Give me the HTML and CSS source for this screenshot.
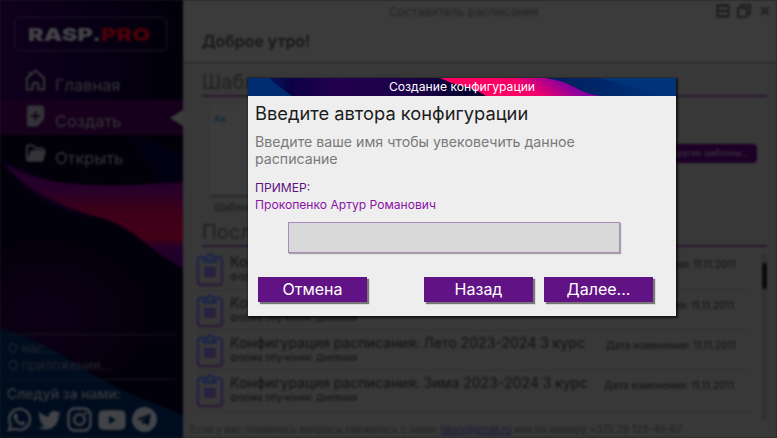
FILE: index.html
```
<!DOCTYPE html>
<html lang="ru">
<head>
<meta charset="utf-8">
<title>Составитель расписания</title>
<link rel="stylesheet" href="styles.css">
</head>
<body>
<svg class="defs" width="0" height="0">
  <defs>
    <linearGradient id="clip" x1="0" y1="0" x2="0" y2="1"><stop offset="0" stop-color="#1b2547"/><stop offset=".5" stop-color="#261d42"/><stop offset="1" stop-color="#2c1a36"/></linearGradient>
    <symbol id="task" viewBox="0 0 28 34">
      <path d="M7 4H4Q2 4 2 7V29Q2 32 5 32H23Q26 32 26 29V7Q26 4 23 4H21" fill="none" stroke="url(#clip)" stroke-width="2.4"/>
      <path d="M7 3H10Q11 0 14 0T18 3H21V10H7Z" fill="#1d2848"/><circle cx="14" cy="5" r="2.2" fill="#363638"/>
      <path d="M8 14H20V24H8Z" fill="#271f40"/><path d="M8 17.3H20M8 20.700H20" stroke="#302b3d" stroke-width=".8"/>
    </symbol>
  </defs>
</svg>
<div class="app">
  <aside class="sidebar">
    <svg class="backdrop" viewBox="0 0 183 438" preserveAspectRatio="none">
      <defs>
        <linearGradient id="night" x1="0" y1="0" x2="1" y2=".12"><stop offset="0" stop-color="#10001d"/><stop offset=".5" stop-color="#070015"/><stop offset="1" stop-color="#02000a"/></linearGradient>
        <linearGradient id="flame" x1="0" y1="0" x2="0" y2="1"><stop offset="0" stop-color="#240029"/><stop offset=".22" stop-color="#26002a"/><stop offset=".45" stop-color="#3c0019"/><stop offset=".7" stop-color="#430016"/><stop offset=".82" stop-color="#23002a"/><stop offset="1" stop-color="#1a0028"/></linearGradient>
        <radialGradient id="violet"><stop offset="0" stop-color="#0e0017"/><stop offset="1" stop-color="#02000b"/></radialGradient>
      </defs>
      <rect width="183" height="438" fill="url(#night)"/>
      <path d="M0 135H183V190L60 185L0 160Z" fill="#020009"/>
      <path d="M130 136Q162 142 183 158V184H160Z" fill="#020112"/>
      <path d="M0 160Q40 215 105 220L183 267V438H0Z" fill="#02000a"/>
      <ellipse cx="40" cy="318" rx="120" ry="85" fill="url(#violet)"/>
      <path d="M5 165Q30 180 75 184Q120 187 183 182V268Q164 259 143 241Q125 225 102 218Q40 203 5 165Z" fill="url(#flame)"/>
      <path d="M0 328Q40 340 70 360Q110 387 145 400Q165 406 183 416V438H0Z" fill="#000d1e"/>
    </svg>
    <div class="logo"><span class="brand">RASP.<b>PRO</b></span></div>
    <nav class="menu">
      <a class="item"><svg viewBox="0 0 22 24"><path d="M2 10L11 2L20 10V22H14V17Q14 15 11 15T8 17V22H2ZM5 7V3" fill="none" stroke="currentColor" stroke-width="2.2" stroke-linejoin="round"/></svg>Главная</a>
      <a class="item active"><svg viewBox="0 0 22 24"><path fill="currentColor" fill-rule="evenodd" d="M4 1H17Q20 1 20 4V15L13 23H4Q2 23 2 20V4Q2 1 4 1ZM10 7V11H6V13H10V17H12V13H16V11H12V7Z"/></svg>Создать</a>
      <a class="item last"><svg viewBox="0 0 22 24"><path d="M2 19V5Q2 3 4 3H8L11 6H17Q19 6 19 8" fill="none" stroke="currentColor" stroke-width="2"/><path d="M6 8H22L19 20H2Z" fill="currentColor"/></svg>Открыть</a>
    </nav>
    <div class="about"><span>О нас...</span><span>О приложении...</span></div>
    <div class="follow">Следуй за нами:</div>
    <div class="social">
      <svg viewBox="0 0 24 24"><path d="M2 22L3.500 17A10 10 0 1 1 8 21Z" fill="none" stroke="currentColor" stroke-width="2.300"/><path d="M8 6Q6 7 6.500 10Q8.500 16 14 17.500Q17 18 18 15.500L15 13.500L13.500 15Q11 14 9.500 11L10.500 9.500L9.500 6.500Z" fill="currentColor"/></svg>
      <svg viewBox="0 0 16 16"><path fill="currentColor" d="M5.026 15c6.038 0 9.341-5.003 9.341-9.334 0-.14 0-.282-.006-.422A6.685 6.685 0 0 0 16 3.542a6.658 6.658 0 0 1-1.889.518 3.301 3.301 0 0 0 1.447-1.817 6.533 6.533 0 0 1-2.087.793A3.286 3.286 0 0 0 7.875 6.030a9.325 9.325 0 0 1-6.767-3.429 3.289 3.289 0 0 0 1.018 4.382A3.323 3.323 0 0 1 .64 6.575v.045a3.288 3.288 0 0 0 2.632 3.218 3.203 3.203 0 0 1-.865.115 3.230 3.230 0 0 1-.614-.057 3.283 3.283 0 0 0 3.067 2.277A6.588 6.588 0 0 1 .78 13.580a6.320 6.320 0 0 1-.78-.045A9.344 9.344 0 0 0 5.026 15z"/></svg>
      <svg viewBox="0 0 24 24"><g fill="none" stroke="currentColor" stroke-width="2.400"><rect x="1.500" y="1.500" width="21" height="21" rx="6"/><circle cx="12" cy="12" r="5"/></g><circle cx="18" cy="6" r="1.500" fill="currentColor"/></svg>
      <svg class="wide" viewBox="0 0 28 20"><path fill="currentColor" fill-rule="evenodd" d="M4 .5Q14-.5 24 .5Q27.500 1 27.500 5V15Q27.500 19 24 19.500Q14 20.500 4 19.500Q.5 19 .5 15V5Q.5 1 4 .5ZM11 6V14L18 10Z"/></svg>
      <svg viewBox="0 0 24 24"><path fill="currentColor" fill-rule="evenodd" d="M12 0A12 12 0 1 0 12 24A12 12 0 0 0 12 0ZM4.500 11.500L18 6.500L16 18L11.500 15L9.500 17V13.500L15 9L8 13Z"/></svg>
    </div>
  </aside>
  <main class="main">
    <header class="top">
      <div class="titlebar"><span class="apptitle">Составитель расписания</span>
        <div class="winbtns">
          <svg viewBox="0 0 14 14"><path d="M1.500 1.500H12.500V12.500H1.500ZM3 7H11" fill="none" stroke="currentColor" stroke-width="1.800"/></svg>
          <svg viewBox="0 0 14 14"><path d="M1 4H10V13H1ZM4 4V1H13V10H10" fill="none" stroke="currentColor" stroke-width="1.600"/></svg>
          <svg viewBox="0 0 14 14"><path d="M3 3L11 11M11 3L3 11" stroke="currentColor" stroke-width="1.600"/></svg>
        </div>
      </div>
      <h1>Доброе утро!</h1>
    </header>
    <h2>Шаблоны</h2>
    <section class="templates">
      <div class="template"><div class="sheet">Aa</div><span>Шаблон 1</span></div>
      <a class="more">Другие шаблоны...</a>
    </section>
    <h2>Последние</h2>
    <section class="recent">
      <div class="rows">
        <div class="row"><svg><use href="#task"/></svg><div class="info"><strong>Конфигурация расписания: Лето 2023-2024 3 курс</strong><small>Форма обучения: Дневная</small></div><time>Дата изменения: 11.11.2011</time></div>
        <div class="row short"><svg><use href="#task"/></svg><div class="info"><strong>Конфигурация расписания: Зима 2023-2024 3 курс</strong><small>Форма обучения: Дневная</small></div><time>Дата изменения: 11.11.2011</time></div>
        <div class="row"><svg><use href="#task"/></svg><div class="info"><strong>Конфигурация расписания: Лето 2023-2024 3 курс</strong><small>Форма обучения: Дневная</small></div><time>Дата изменения: 11.11.2011</time></div>
        <div class="row short"><svg><use href="#task"/></svg><div class="info"><strong>Конфигурация расписания: Зима 2023-2024 3 курс</strong><small>Форма обучения: Дневная</small></div><time>Дата изменения: 11.11.2011</time></div>
      </div>
      <div class="scroll"><i></i></div>
    </section>
    <footer>Если у вас появились вопросы свяжитесь с нами: <a>tikon@gmail.ru</a> или по номеру +375 29 123-45-67</footer>
  </main>
</div>
<div class="modal">
  <div class="modal-head">
    <svg class="backdrop" viewBox="0 0 428 18" preserveAspectRatio="none">
      <defs>
        <linearGradient id="mh"><stop offset="0" stop-color="#002b70"/><stop offset=".1" stop-color="#0c0045"/><stop offset=".12" stop-color="#12004a"/><stop offset=".2" stop-color="#22004d"/><stop offset=".38" stop-color="#1b0048"/><stop offset=".5" stop-color="#07002e"/></linearGradient>
        <linearGradient id="mp" gradientUnits="userSpaceOnUse" x1="270" y1="18" x2="290" y2="-12"><stop offset="0" stop-color="#ff0062"/><stop offset=".35" stop-color="#f0006c"/><stop offset="1" stop-color="#8b009d"/></linearGradient>
        <linearGradient id="mb"><stop offset="0" stop-color="#001d58"/><stop offset="1" stop-color="#003580"/></linearGradient>
        <linearGradient id="ml" x1="0" y1="0" x2="1" y2="-.4"><stop offset=".45" stop-color="#002d72"/><stop offset="1" stop-color="#100a50"/></linearGradient>
      </defs>
      <rect width="428" height="18" fill="url(#mh)"/>
      <path d="M0 0H20L44 18H0Z" fill="url(#ml)"/>
      <path d="M192 0H428V18H238Q228 11 214 8Q202 5 192 0Z" fill="url(#mp)"/>
      <path d="M297 0H428V18H354Q340 17 328 10Q314 2 297 0Z" fill="url(#mb)"/>
      <path d="M350 0H428V18H414Q388 9 350 0Z" fill="#003478"/>
    </svg>
    <span>Создание конфигурации</span>
  </div>
  <div class="modal-body">
    <h3>Введите автора конфигурации</h3>
    <p class="hint">Введите ваше имя чтобы увековечить данное<br>расписание</p>
    <p class="example"><span>ПРИМЕР:</span><br>Прокопенко Артур Романович</p>
    <input class="field" type="text" aria-label="Автор">
    <div class="actions"><button class="cancel">Отмена</button><button>Назад</button><button>Далее...</button></div>
  </div>
</div>
</body>
</html>
```
FILE: styles.css
```
* { box-sizing: border-box; }
body { margin: 0; width: 777px; height: 438px; overflow: hidden; position: relative; background: #1c1c1c; font-family: Inter, "Liberation Sans", sans-serif; }
h1, h2, h3, p { margin: 0; font-weight: 400; }
.defs { position: absolute; }
.backdrop { position: absolute; inset: 0; width: 100%; height: 100%; z-index: -1; }

.app { display: flex; height: 438px; filter: blur(1.25px); background: #383838; }
.sidebar { position: relative; z-index: 0; width: 183px; display: flex; flex-direction: column; padding-top: 17px; color: #404043; }
.logo { width: 153px; height: 34px; margin-left: 14px; border: 1px solid #1c1826; border-radius: 5px; display: flex; align-items: center; padding-left: 13px; }
.brand { font-size: 18px; font-weight: 900; transform: scaleX(1.31); transform-origin: left; white-space: nowrap; color: #424245; }
.brand b { color: #4a0008; font-weight: 900; }
.menu { margin-top: 12px; }
.item { position: relative; height: 37px; display: flex; align-items: center; padding: 6px 0 0 25px; gap: 9px; font-size: 16.400px; line-height: 30px; color: #343438; }
.item svg { width: 21px; height: 24px; margin-top: -9px; }
.item.active { height: 35px; background: #17001c; }
.item.active::after { content: ""; position: absolute; right: 0; top: 10px; border: 8px solid transparent; border-right: 13px solid #3b3b3b; border-left: 0; }
.item.last { padding-top: 9px; }
.about { margin: 162px 8px 0; height: 46px; border: solid #18171f; border-width: 1px 0; display: flex; flex-direction: column; font-size: 13px; line-height: 17px; padding-top: 5px; color: #25252e; }
.follow { margin: 6px 0 0 7px; font-size: 13.800px; line-height: 16px; font-weight: 600; white-space: nowrap; color: #33343a; }
.social { display: flex; align-items: center; gap: 6px; margin: 5px 0 0 7px; color: #414347; }
.social svg { width: 25px; height: 25px; }
.social svg:nth-child(2) { width: 23px; }
.social .wide { width: 28px; height: 20px; }

.main { flex: 1; min-width: 0; display: flex; flex-direction: column; background: #383838; color: #161616; }
.top { height: 64px; background: #3b3b3b; border-bottom: 1px solid #252525; }
.titlebar { height: 24px; display: flex; padding-left: 206px; justify-content: space-between; }
.apptitle { font-size: 12.100px; line-height: 24px; color: #222; }
.winbtns { display: flex; gap: 7px; padding: 4px 5px 0 0; color: #171717; }
.winbtns svg { width: 14px; height: 14px; }
h1 { font-size: 15.900px; font-weight: 600; line-height: 35px; margin-left: 19px; }
h2 { height: 34px; margin: 0 10px 0 19px; border-bottom: 2px solid #291631; font-size: 20px; line-height: 38px; color: #202020; }
.templates { height: 116px; padding: 8px 20px 0 27px; display: flex; justify-content: space-between; }
.template { width: 120px; }
.sheet { height: 92px; background: #3b3b3b; border-bottom: 2px solid #292929; padding: 8px 4px; font-size: 9px; font-weight: 700; color: #112c3d; }
.template span { display: block; margin-left: 4px; font-size: 10px; line-height: 20px; }
.more { width: 100px; height: 19px; margin-top: 39px; border-radius: 4px; background: #1c0026; color: #3d3441; font-size: 8.300px; line-height: 18px; padding-right: 8px; text-align: right; font-weight: 500; }
.recent { display: flex; height: 172px; margin-top: 3px; }
.rows { width: 567px; padding-left: 13px; }
.row { height: 40.300px; display: flex; align-items: flex-start; border-bottom: 1px solid #303030; padding-top: 3px; }
.row svg { width: 28px; height: 34px; }
.info { width: 375px; margin-left: 6px; white-space: nowrap; }
.info strong { display: block; font-size: 13.920px; font-weight: 500; line-height: 19px; }
.info small { display: block; font-size: 9.600px; line-height: 10px; font-weight: 500; }
.row time { font-size: 10px; font-weight: 500; line-height: 22px; margin-left: 1px; white-space: nowrap; }
.row.short time { margin-left: -1px; }
.scroll { width: 5px; height: 166px; margin: 4px 0 0 12px; padding-top: 9px; background: #303030; }
.scroll i { display: block; height: 26px; background: #0b0b0b; border-radius: 2px; }
footer { margin-left: 7px; font-size: 10.050px; line-height: 17px; white-space: nowrap; color: #202020; }
footer a { color: #1b143b; text-decoration: underline; }

.modal { position: absolute; left: 248px; top: 78px; width: 428px; height: 238px; background: #eee; box-shadow: 1px 1px 2px 1px rgba(0,0,0,.65); }
.modal-head { position: relative; z-index: 0; height: 18px; color: #fff; font-size: 12.150px; line-height: 18px; text-align: center; }
.modal-body { padding: 6px 7px 0; }
h3 { font-size: 18.300px; line-height: 22px; color: #1c1c1c; }
.hint { margin-top: 9px; font-size: 14.150px; line-height: 17px; color: #7a7a7a; }
.example { margin-top: 12px; font-size: 12.100px; line-height: 17px; color: #8b12a5; }
.example span { color: #5d1085; }
.field { display: block; width: 332px; height: 31px; margin: 9px 0 0 33px; background: #d9d9d9; border: 1px solid #a98abd; border-radius: 0; box-shadow: 1px 1px 1px rgba(0,0,0,.3); outline: 0; }
.actions { display: flex; margin: 24px 0 0 3px; gap: 11px; }
.actions button { width: 109px; height: 25px; padding: 0; border: 0; background: #611284; color: #fff; font: 16px/25px Inter, sans-serif; box-shadow: 2px 2px 1px rgba(0,0,0,.5); }
.actions .cancel { margin-right: 46px; }
```
